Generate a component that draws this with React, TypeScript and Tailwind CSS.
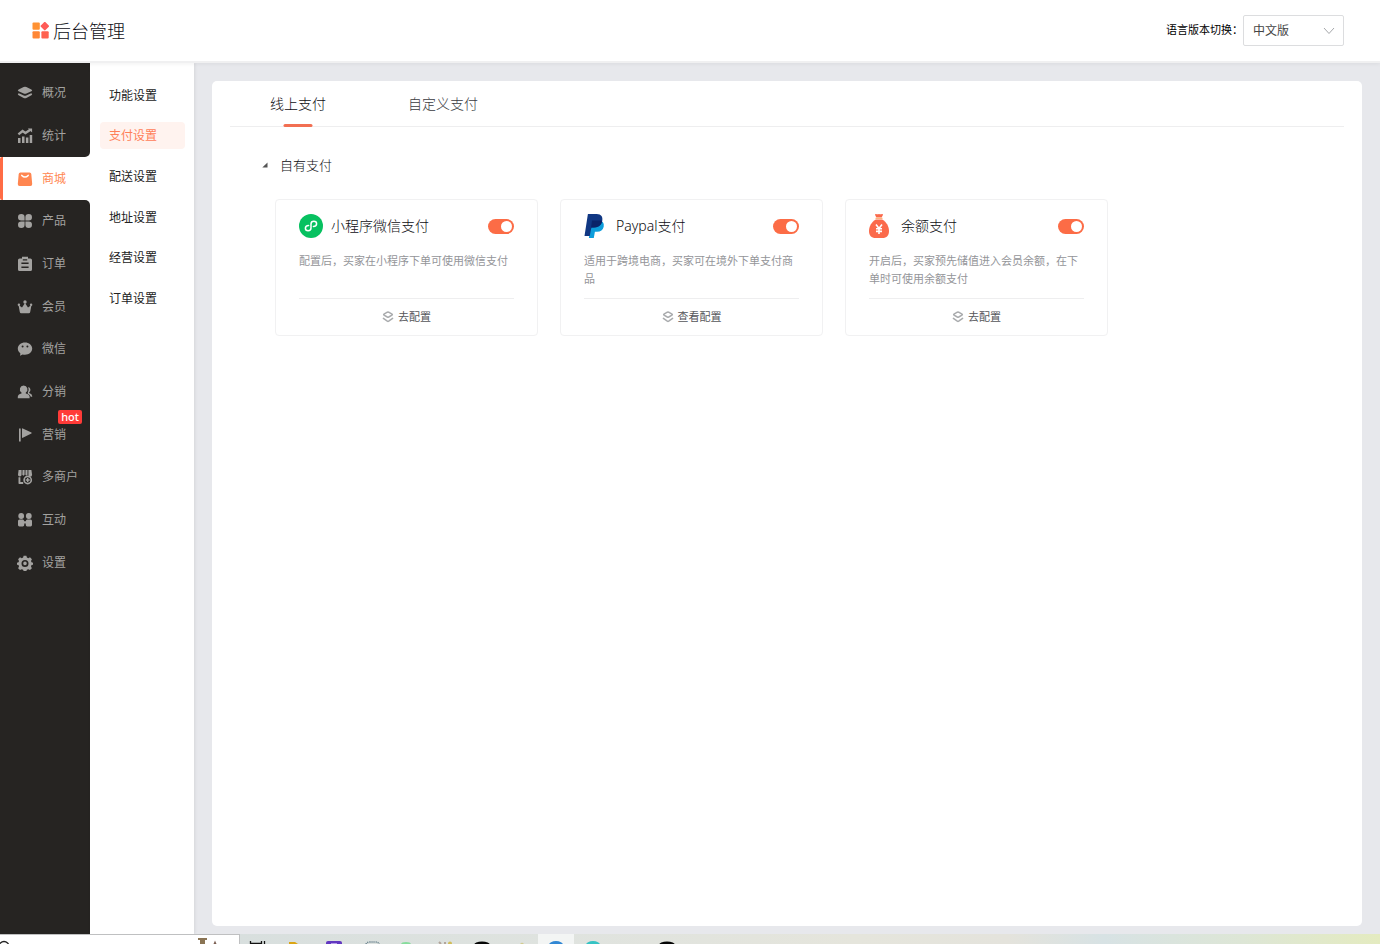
import { useState } from "react";
import type { ReactNode } from "react";
import clsx from "clsx";

const NAV_ITEMS: { id: string; label: string; icon: ReactNode; badge?: string }[] = [
  {
    id: "overview",
    label: "概况",
    icon: (
      <>
        <path d="M6.6 2.1q1.4-.5 2.8 0l5 2.3q1.6.9 0 1.8l-5 2.3q-1.400.5-2.800 0l-5-2.300q-1.600-.9 0-1.800z" />
        <path d="M1 8.600q.7-.4 1.500 0l4.200 2q1.300.5 2.600 0l4.200-2q.8-.4 1.500 0 .5 1-.6 1.700l-5 2.700q-1.400.6-2.800 0l-5-2.700Q.5 9.600 1 8.600z" />
      </>
    ),
  },
  {
    id: "stats",
    label: "统计",
    icon: (
      <>
        <path d="M1.4 6.4 5.6 3l2.8 2L13.4 1.700" fill="none" stroke="currentColor" strokeWidth="2.4" />
        <path d="M10.800 .5h4.300v4zM1 10h2.500v5H1zM5 8.400h2.500V15H5zM8.900 9.600h2.500V15H8.900zM12.700 7h2.500v8h-2.500z" />
      </>
    ),
  },
  {
    id: "mall",
    label: "商城",
    icon: (
      <>
        <path d="M3.400 1.400h9.200q1.500 0 1.700 1.500l.9 10q.1 2-1.800 2H2.600q-1.900 0-1.800-2l.9-10q.2-1.500 1.700-1.500z" />
        <path d="M4.800 4.400q3.200 3.400 6.400 0" fill="none" stroke="white" strokeWidth="1.5" strokeLinecap="round" />
      </>
    ),
  },
  {
    id: "product",
    label: "产品",
    icon: (
      <path d="M4.300 1a3.300 3.300 0 0 1 3.300 3.300v3.300H4.300a3.300 3.300 0 0 1 0-6.600zm7.400 0a3.300 3.300 0 0 1 0 6.600H8.400V4.300A3.300 3.300 0 0 1 11.700 1zM4.300 8.400h3.300v3.300a3.300 3.300 0 1 1-3.300-3.300zm4.100 0h3.300a3.300 3.300 0 1 1-3.300 3.300z" />
    ),
  },
  {
    id: "order",
    label: "订单",
    icon: (
      <path
        fillRule="evenodd"
        d="M5 .8h6v1.600h2.400q1.600 0 1.600 1.600v9.400q0 1.600-1.600 1.600H2.600Q1 15 1 13.400V4q0-1.600 1.600-1.600H5zM5.800 3.200v1.300h4.400V3.200zM4.400 6.600v1.500h7.200V6.600zm0 3.800v1.500h7.200v-1.500z"
      />
    ),
  },
  {
    id: "member",
    label: "会员",
    icon: (
      <>
        <circle cx="8" cy="3" r="1.7" />
        <circle cx="1.9" cy="5.8" r="1.2" />
        <circle cx="14.1" cy="5.8" r="1.2" />
        <path d="M1.500 6 5 8.400 8 4l3 4.400L14.500 6l-1.300 7q-.2 1.300-1.400 1.300H4.200q-1.200 0-1.400-1.300z" />
      </>
    ),
  },
  {
    id: "wechat",
    label: "微信",
    icon: (
      <path
        fillRule="evenodd"
        d="M8 1.400c4 0 7.200 2.700 7.200 6.200S12 13.800 8 13.800c-.9 0-1.700-.1-2.400-.4L3 14.800l.4-2.400C1.800 11.300 .8 9.600 .8 7.600 .8 4.100 4 1.400 8 1.400zM5.600 4.500a1 1 0 1 0 0 2 1 1 0 0 0 0-2zm4.800 0a1 1 0 1 0 0 2 1 1 0 0 0 0-2z"
      />
    ),
  },
  {
    id: "distribution",
    label: "分销",
    icon: (
      <>
        <path d="M6.600 1.400a3.900 3.900 0 0 1 2.200 7.100v1q3.800.9 3.800 3.300v1.400H.8v-1.400q0-2.400 3.700-3.300v-1a3.900 3.900 0 0 1 2.100-7.100z" />
        <path d="M11.200 3a2.900 2.900 0 0 1 1 5.200v.8q3 1 3 2.900v.8h-1.400q-.6-2-3-3V8.400q1.600-2.200.4-5.400z" />
      </>
    ),
  },
  {
    id: "marketing",
    label: "营销",
    badge: "hot",
    icon: <path d="M2 1.500h1.700v13H2zM5 1.900q0-.8.8-.5l8.600 4.200q.7.500 0 1L5.800 10.800q-.8.3-.8-.5z" />,
  },
  {
    id: "merchants",
    label: "多商户",
    icon: (
      <>
        <path d="M1.600 1h3v4.800a1.800 1.800 0 0 1-3.600 0zM5.500 1h2.100v4.800a1.400 1.400 0 0 1-2.300 0zM8.500 1h2v4.800a1.400 1.400 0 0 1-2.100 0zM11.400 1h3l.7 4.800a1.800 1.800 0 0 1-3.700 0z" />
        <path d="M1.500 8.200h1.900v4.900h2.800V15H2.300q-.8 0-.8-.8z" />
        <circle cx="10.700" cy="11" r="3.600" fill="none" stroke="currentColor" strokeWidth="1.600" />
        <path d="M10 9h1.400v1.300h1.300v1.400h-1.300V13H10v-1.300H8.700v-1.400H10z" />
      </>
    ),
  },
  {
    id: "interact",
    label: "互动",
    icon: (
      <>
        <circle cx="4.200" cy="4" r="2.900" />
        <circle cx="11.800" cy="4" r="2.900" />
        <path d="M2.400 7.600h3.400q1.200 0 1.400 1.600h1.600q.2-1.600 1.400-1.600h3.400q1.400 0 1.400 1.500v4q0 1.400-1.400 1.400h-3.400q-1.400 0-1.400-1.400v-1.600H7.200v1.600q0 1.400-1.400 1.400H2.400Q1 14.500 1 13.100v-4q0-1.500 1.400-1.500z" />
      </>
    ),
  },
  {
    id: "settings",
    label: "设置",
    icon: (
      <path
        fillRule="evenodd"
        d="M6.600 .8h2.800l.5 1.800 1.400.6 1.700-.9 1.900 1.900-.9 1.700.5 1.400 1.500.4v2l-1.500.4-.5 1.400.9 1.700-1.900 1.900-1.700-.9-1.400.5-.5 1.200H6.600l-.5-1.200-1.400-.5-1.700.9-1.900-1.900.9-1.700-.5-1.400L0 9.700v-2l1.500-.4L2 5.900l-.9-1.700L3 2.300l1.700.9 1.400-.6zM8 4.900a3.500 3.500 0 1 0 0 7 3.500 3.500 0 0 0 0-7zm0 1.700a1.800 1.800 0 1 1 0 3.600 1.800 1.800 0 0 1 0-3.600z"
      />
    ),
  },
];

const SUB_ITEMS = ["功能设置", "支付设置", "配送设置", "地址设置", "经营设置", "订单设置"];

const TABS = ["线上支付", "自定义支付"];

const MiniProgramIcon = () => (
  <svg viewBox="0 0 24 24" className="size-6" aria-hidden="true">
    <circle cx="12" cy="12" r="12" fill="#07c160" />
    <path
      d="M9.600 11.600c-2 .1-3.200 1.200-3.200 2.700s1.200 2.500 2.700 2.500c1.700 0 2.900-1.100 2.900-2.700V9.900c0-1.600 1.200-2.700 2.900-2.700 1.500 0 2.700 1 2.700 2.500s-1.200 2.600-3.200 2.700"
      fill="none"
      stroke="white"
      strokeWidth="1.5"
      strokeLinecap="round"
    />
  </svg>
);

const PaypalIcon = () => (
  <svg viewBox="0 0 24 24" className="size-6" aria-hidden="true">
    <path d="M7 8h11.800q1.600 2 .9 4.800-1.200 5-6.700 5h-2.100L9.800 24H4.900z" fill="#0d9ddb" />
    <path d="M3.900 0h8.800c4.600 0 6.400 2.900 5.500 6.900-1 4.600-4.300 6.500-8.500 6.500H7.300L5.800 22H.5z" fill="#103783" />
    <path d="M8 6.600h8.800q1 0 1.500.4c-1 4.500-4.300 6.400-8.600 6.400H7.300l-.8 4z" fill="#0a2369" />
  </svg>
);

const BalanceIcon = () => (
  <svg viewBox="0 0 24 24" className="size-6" aria-hidden="true">
    <path d="M6 .8Q6 0 7 .1q1.500.4 3 0 1.500.4 3 0 1-.1 1 .7l-1.300 2.700H7.300z" fill="#fb6a4b" />
    <path d="M6.500 4.400h7" stroke="#fcb57d" strokeWidth="1.3" />
    <path
      d="M6.800 5.500h6.400c4.500 2.600 6.800 7.200 6.800 11.500 0 4.700-2.400 7-6.500 7h-7C2.400 24 0 21.700 0 17 0 12.700 2.300 8.100 6.800 5.500z"
      fill="#fb6a4b"
    />
    <path d="M7 10.500l3 4 3-4M10 14.500V20M7 14.800h6M7 17.400h6" fill="none" stroke="white" strokeWidth="1.6" />
  </svg>
);

const METHODS = [
  {
    id: "wechat-mini",
    title: "小程序微信支付",
    desc: "配置后，买家在小程序下单可使用微信支付",
    action: "去配置",
    icon: <MiniProgramIcon />,
  },
  {
    id: "paypal",
    title: "Paypal支付",
    desc: "适用于跨境电商，买家可在境外下单支付商品",
    action: "查看配置",
    icon: <PaypalIcon />,
  },
  {
    id: "balance",
    title: "余额支付",
    desc: "开启后，买家预先储值进入会员余额，在下单时可使用余额支付",
    action: "去配置",
    icon: <BalanceIcon />,
  },
];

const Header = () => (
  <header className="relative z-10 flex h-[63px] items-center justify-between border-b-2 border-[#f0f0f1] bg-white pr-9 pl-8 shadow-[0_1px_4px_rgba(0,0,0,0.06)]">
    <div className="flex items-center gap-1">
      <svg viewBox="0 0 17 17" className="size-[17px]" aria-hidden="true">
        <rect x="0.500" y="0.500" width="7.300" height="7.300" rx="1" fill="#ff9233" />
        <rect x="0.500" y="9.300" width="7.300" height="7.300" rx="1" fill="#ff8736" />
        <rect x="9.400" y="9.300" width="7.300" height="7.300" rx="1" fill="#ff6250" />
        <rect x="9.500" y="0.800" width="6.600" height="6.600" rx="1" fill="#ff5b57" transform="rotate(45 12.800 4.100)" />
      </svg>
      <span className="text-lg leading-6 font-light text-[#0c0d14]">后台管理</span>
    </div>
    <div className="flex items-center">
      <label htmlFor="lang" className="text-[11px] text-black">
        语言版本切换：
      </label>
      <div className="relative">
        <select
          id="lang"
          className="h-[31px] w-[101px] appearance-none rounded-xs border border-[#dcdddf] bg-white pr-6 pl-[9px] text-xs text-[#444]"
        >
          <option>中文版</option>
          <option>英文版</option>
        </select>
        <svg
          viewBox="0 0 12 8"
          className="pointer-events-none absolute top-3 right-[9px] h-2 w-3"
          fill="none"
          stroke="#a5a7aa"
          aria-hidden="true"
        >
          <path d="M1 1l5 5.500L11 1" />
        </svg>
      </div>
    </div>
  </header>
);

const Sidebar = ({ active }: { active: number }) => (
  <nav className="flex w-[90px] shrink-0 flex-col">
    <div className="h-[9px] bg-[#262422]" />
    <ul className="grid h-[512px] grid-rows-12">
      {NAV_ITEMS.map((item, i) => (
        <li
          key={item.id}
          className={clsx(
            "relative",
            i === active ? "bg-white text-[#ff8650]" : "bg-[#262422] text-[#a3a2a0]",
            i === active - 1 && "rounded-br-[5px]",
            i === active + 1 && "rounded-tr-[5px]",
          )}
        >
          <a
            href={`#${item.id}`}
            className={clsx(
              "flex h-full items-center gap-[9px]",
              i === active ? "rounded-l-xs border-l-3 border-[#ff6c45] pl-[14px]" : "pl-[17px]",
            )}
          >
            <svg viewBox="0 0 16 16" className="size-4 shrink-0" fill="currentColor" aria-hidden="true">
              {item.icon}
            </svg>
            <span className="text-xs">{item.label}</span>
          </a>
          {item.badge && (
            <span className="absolute -top-[3px] right-2 rounded-xs bg-[#ff3b38] px-[3px] text-[11px] leading-[14px] font-medium text-white">
              {item.badge}
            </span>
          )}
        </li>
      ))}
    </ul>
    <div className="flex-1 bg-[#262422]" />
  </nav>
);

const SubMenu = () => (
  <nav className="w-[104px] shrink-0 bg-white px-[10px] pt-3 shadow-[1px_0_3px_rgba(0,0,0,0.08)]">
    <ul className="grid h-[244px] grid-rows-6 items-center">
      {SUB_ITEMS.map(label => (
        <li key={label}>
          <a
            href={`#${label}`}
            className={clsx(
              "block w-[85px] rounded-sm pl-[9px] text-xs leading-[27px]",
              label === "支付设置" ? "bg-[#fff3ef] text-[#ff8058]" : "text-[#222]",
            )}
          >
            {label}
          </a>
        </li>
      ))}
    </ul>
  </nav>
);

const MethodCard = ({ method }: { method: (typeof METHODS)[number] }) => {
  const [enabled, setEnabled] = useState(true);

  return (
    <article className="w-[263px] rounded-sm border border-[#f1f1f2] px-[23px] pt-[14px]">
      <div className="flex items-center">
        {method.icon}
        <label htmlFor={method.id} className="ml-2 flex-1 text-sm leading-6 font-light text-[#0c0d11]">
          {method.title}
        </label>
        <input
          id={method.id}
          type="checkbox"
          role="switch"
          checked={enabled}
          onChange={e => setEnabled(e.target.checked)}
          className="flex h-[15px] w-[26px] appearance-none items-center rounded-full bg-gray-300 px-[2px] before:size-[11px] before:rounded-full before:bg-white checked:justify-end checked:bg-[#fc6c46]"
        />
      </div>
      <p className="mt-[14px] min-h-9 text-[11px] leading-[18px] text-[#949599]">{method.desc}</p>
      <div className="mt-[10px] border-t border-[#eeeeef]">
        <button type="button" className="flex h-9 w-full items-center justify-center gap-1 text-[11px] text-[#55565a]">
          <svg viewBox="0 0 12 12" className="size-3" fill="none" stroke="#a9abad" strokeWidth="1.5" aria-hidden="true">
            <path d="M5.300 1.200q.7-.3 1.400 0l3.300 1.900q.7.5 0 1L6.700 6q-.7.3-1.400 0L2 4.100q-.7-.5 0-1z" />
            <path d="M1.400 7.400l3.900 2.800q.7.400 1.400 0l3.900-2.800" strokeLinecap="round" />
          </svg>
          {method.action}
        </button>
      </div>
    </article>
  );
};

const Taskbar = () => (
  <footer className="relative h-[10px] overflow-hidden bg-[linear-gradient(90deg,#d8dfde_17%,#dfe3df_40%,#e5e5dc_62%,#e4e3dc_73%,#d7e2e4_80%,#dde6d6_90%,#e4ebc0_100%)]">
    <div className="h-full w-[240px] border-t border-r border-[#bfc0c1] bg-white" />
    <svg viewBox="0 0 700 10" className="absolute top-0 left-0 h-[10px] w-[700px]" aria-hidden="true">
      <circle cx="4" cy="12.500" r="5" fill="none" stroke="#222" strokeWidth="1.3" />
      <path d="M198 4h9v2h-2v4h-5V6h-2z" fill="#8a7454" />
      <path d="M215 6.500l1.500 3.500h-3z" fill="#7a5d50" />
      <path d="M250.500 7v2.500h11V7M264.500 7v3" fill="none" stroke="#111" strokeWidth="1.3" />
      <path d="M289 8h6l3 2h-9z" fill="#dba514" />
      <rect x="326" y="7" width="16" height="8" rx="2" fill="#6137c0" />
      <path d="M331 9.500h6" stroke="#b69be9" />
      <path d="M366 10q1-2 4-2h5q4 0 4 2" fill="none" stroke="#597583" strokeDasharray="1 1" strokeWidth="1.5" />
      <ellipse cx="406" cy="10.500" rx="5" ry="2.500" fill="#86dc9c" />
      <path d="M439 8l2 2M445 8v2" stroke="#b2a59b" strokeWidth="2" />
      <circle cx="450" cy="9.500" r="2" fill="#d1bd58" />
      <ellipse cx="482" cy="11" rx="8" ry="3.500" fill="#050505" />
      <circle cx="522" cy="10.500" r="1.800" fill="#d2cc91" />
      <rect x="538" y="0" width="36" height="10" fill="#f3f5f4" />
      <ellipse cx="556" cy="11" rx="7" ry="4" fill="#3187d4" />
      <ellipse cx="593" cy="11" rx="7" ry="4" fill="#35c3c4" />
      <ellipse cx="667" cy="11" rx="8" ry="3.500" fill="#050505" />
    </svg>
  </footer>
);

export default function App() {
  const [tab, setTab] = useState(TABS[0]);

  return (
    <div className="flex min-h-screen flex-col bg-[#e7e8ec] font-['Noto_Sans','Noto_Sans_CJK_SC',sans-serif]">
      <Header />
      <div className="flex flex-1">
        <div className="flex bg-white">
          <Sidebar active={2} />
          <SubMenu />
        </div>
        <main className="flex flex-1 px-[18px] pt-[18px] pb-2">
          <section className="flex-1 rounded-[5px] bg-white px-[18px]">
            <div role="tablist" className="flex h-[46px] gap-[82px] border-b border-[#eeeeef] pl-10">
              {TABS.map(name => (
                <button
                  key={name}
                  type="button"
                  role="tab"
                  aria-selected={tab === name}
                  onClick={() => setTab(name)}
                  className={clsx("relative text-sm font-light", tab === name ? "text-[#0c0d11]" : "text-[#3a3b3f]")}
                >
                  {name}
                  {tab === name && (
                    <span className="absolute -bottom-px left-1/2 h-[3px] w-[29px] -translate-x-1/2 rounded-full bg-[#f26f52]" />
                  )}
                </button>
              ))}
            </div>
            <h2 className="mt-7 flex items-center gap-3 pl-8 text-[13px] leading-5 font-light text-[#0c0d11]">
              <svg viewBox="0 0 6 6" className="size-[6px]" fill="#555" aria-hidden="true">
                <path d="M5.500 .5v5H.3z" />
              </svg>
              自有支付
            </h2>
            <div className="mt-6 mb-6 flex flex-wrap gap-[22px] pl-[45px]">
              {METHODS.map(m => (
                <MethodCard key={m.id} method={m} />
              ))}
            </div>
          </section>
        </main>
      </div>
      <Taskbar />
    </div>
  );
}
